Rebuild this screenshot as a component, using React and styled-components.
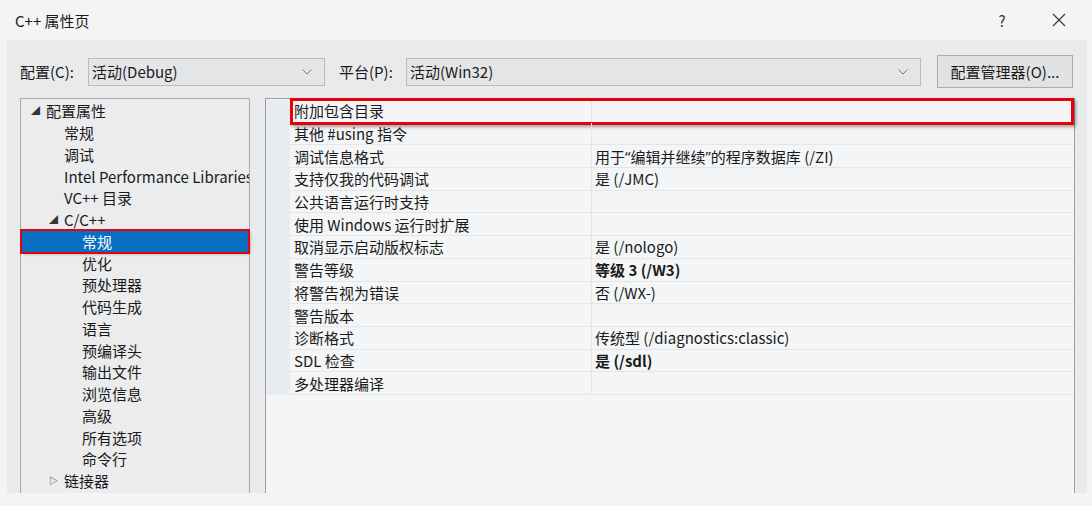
import React from "react";
import styled, { createGlobalStyle } from "styled-components";

const GlobalStyle = createGlobalStyle`
body {
  margin: 0;
  background-color: #f3f4f4;
  font-family: "Noto Sans CJK SC", "Noto Sans", sans-serif;
  color: #1a1a1a;
}
`

const Window = styled.div`
width: 1092px;
height: 506px;
display: flex;
flex-direction: column;
overflow: hidden;
`

const TitleBar = styled.div`
height: 40px;
display: flex;
align-items: center;
padding: 0 18px 0 15px;
font-size: 15px;
`

const Title = styled.div`
flex: 1;
`

const TitleButton = styled.div`
width: 30px;
display: flex;
justify-content: center;
align-items: center;
color: #333;
font-size: 15px;
margin-left: ${props => props.gap || 0}px;
`

const Body = styled.div`
margin: 0 5px 0 7px;
height: 453px;
background-color: #e8eaec;
padding: 15px 12px 0 13px;
box-sizing: border-box;
display: flex;
flex-direction: column;
overflow: hidden;
`

const ConfigRow = styled.div`
display: flex;
align-items: center;
height: 33px;
font-size: 15px;
`

const Label = styled.div`
margin-left: ${props => props.offset || 0}px;
width: ${props => props.width}px;
`

const Select = styled.div`
width: ${props => props.width ? props.width + "px" : "auto"};
flex: ${props => props.width ? "none" : 1};
height: 28px;
box-sizing: border-box;
border: 1px solid #bcbcbc;
background-color: #e4e5e7;
display: flex;
align-items: center;
padding: 0 0 0 3px;
`

const SelectText = styled.div`
flex: 1;
`

const Chevron = styled.svg`
width: 10px;
height: 6px;
margin-right: 12px;
`

const ManagerButton = styled.button`
margin-left: 16px;
margin-right: 2px;
width: 136px;
height: 33px;
border: 1px solid #adadad;
background-color: #e1e2e4;
font-family: inherit;
font-size: 15px;
color: #1a1a1a;
padding: 0;
`

const Panels = styled.div`
margin-top: 10px;
display: flex;
gap: 15px;
flex: 1;
min-height: 420px;
`

const Tree = styled.div`
width: 230px;
box-sizing: border-box;
border: 1px solid #a8a8a8;
background-color: #eaecee;
padding-top: 1px;
font-size: 15px;
`

const TreeItem = styled.div`
height: 21.75px;
display: flex;
align-items: center;
padding-left: ${props => props.level * 18 + 10}px;
white-space: nowrap;
overflow: hidden;
box-sizing: border-box;
${props => props.selected && `
  background-color: #0a6fc2;
  color: #ffffff;
  outline: 2px solid #e8000b;
  margin: 0 1px;
  padding-left: ${props.level * 18 + 9}px;
  box-shadow: 2px 2px 3px rgba(0,0,0,0.35);
`}
`

const Arrow = styled.span`
width: 15px;
font-size: 9px;
color: #333;
flex: none;
`

const Grid = styled.div`
flex: 1;
box-sizing: border-box;
border: 1px solid #a0a0a0;
border-bottom: none;
background-color: #f3f5f6;
display: flex;
flex-direction: column;
padding-top: 1px;
`

const PropRow = styled.div`
display: grid;
grid-template-columns: 24px 302px 1fr;
height: 22.7px;
font-size: 15px;
position: relative;
`

const Gutter = styled.div`
background-color: #e8ecf0;
`

const Cell = styled.div`
display: flex;
align-items: center;
padding-left: ${props => props.pad || 4}px;
border-bottom: 1px solid #e2e6ea;
border-right: ${props => props.divider ? "1px solid #e2e6ea" : "none"};
font-weight: ${props => props.bold ? 700 : 400};
white-space: pre;
overflow: hidden;
`

const Quote = styled.span`
font-family: "Noto Sans", sans-serif;
`

const Highlight = styled.div`
position: absolute;
left: 24px;
right: 0;
top: -2px;
bottom: -2px;
border: 3px solid #e8000b;
box-shadow: 2px 2px 3px rgba(0,0,0,0.35);
pointer-events: none;
`

const GridFill = styled.div`
flex: 1;
`

const treeItems = [
  { text: "配置属性", level: 0, arrow: "◢" },
  { text: "常规", level: 1 },
  { text: "调试", level: 1 },
  { text: "Intel Performance Libraries", level: 1 },
  { text: "VC++ 目录", level: 1 },
  { text: "C/C++", level: 1, arrow: "◢" },
  { text: "常规", level: 2, selected: true },
  { text: "优化", level: 2 },
  { text: "预处理器", level: 2 },
  { text: "代码生成", level: 2 },
  { text: "语言", level: 2 },
  { text: "预编译头", level: 2 },
  { text: "输出文件", level: 2 },
  { text: "浏览信息", level: 2 },
  { text: "高级", level: 2 },
  { text: "所有选项", level: 2 },
  { text: "命令行", level: 2 },
  { text: "链接器", level: 1, arrow: "▷" },
]

const debugFormat = (
  <>用于<Quote>“</Quote>编辑并继续<Quote>”</Quote>的程序数据库 (/ZI)</>
)

const props = [
  ["附加包含目录", ""],
  ["其他 #using 指令", ""],
  ["调试信息格式", debugFormat],
  ["支持仅我的代码调试", "是 (/JMC)"],
  ["公共语言运行时支持", ""],
  ["使用 Windows 运行时扩展", ""],
  ["取消显示启动版权标志", "是 (/nologo)"],
  ["警告等级", "等级 3 (/W3)", true],
  ["将警告视为错误", "否 (/WX-)"],
  ["警告版本", ""],
  ["诊断格式", "传统型 (/diagnostics:classic)"],
  ["SDL 检查", "是 (/sdl)", true],
  ["多处理器编译", ""],
]

export default function App() {
  return (
    <>
      <GlobalStyle />
      <Window>
        <TitleBar>
          <Title>C++ 属性页</Title>
          <TitleButton>?</TitleButton>
          <TitleButton gap={27}>
            <svg width="14" height="14" viewBox="0 0 14 14">
              <path d="M1 1 L13 13 M13 1 L1 13" stroke="#333" strokeWidth="1.1" fill="none" />
            </svg>
          </TitleButton>
        </TitleBar>
        <Body>
          <ConfigRow>
            <Label width={68}>配置(C):</Label>
            <Select width={237}>
              <SelectText>活动(Debug)</SelectText>
              <Chevron viewBox="0 0 10 6">
                <path d="M0.5 0.5 L5 5 L9.5 0.5" stroke="#777" fill="none" />
              </Chevron>
            </Select>
            <Label offset={14} width={67}>平台(P):</Label>
            <Select>
              <SelectText>活动(Win32)</SelectText>
              <Chevron viewBox="0 0 10 6">
                <path d="M0.5 0.5 L5 5 L9.5 0.5" stroke="#777" fill="none" />
              </Chevron>
            </Select>
            <ManagerButton>配置管理器(O)...</ManagerButton>
          </ConfigRow>
          <Panels>
            <Tree>
              {treeItems.map((item, i) => (
                <TreeItem key={i} level={item.level} selected={item.selected}>
                  <Arrow>{item.arrow}</Arrow>
                  {item.text}
                </TreeItem>
              ))}
            </Tree>
            <Grid>
              {props.map(([name, value, bold], i) => (
                <PropRow key={i}>
                  <Gutter />
                  <Cell divider>{name}</Cell>
                  <Cell pad={3} bold={bold}>{value}</Cell>
                  {i === 0 && <Highlight />}
                </PropRow>
              ))}
              <GridFill />
            </Grid>
          </Panels>
        </Body>
      </Window>
    </>
  )
}
